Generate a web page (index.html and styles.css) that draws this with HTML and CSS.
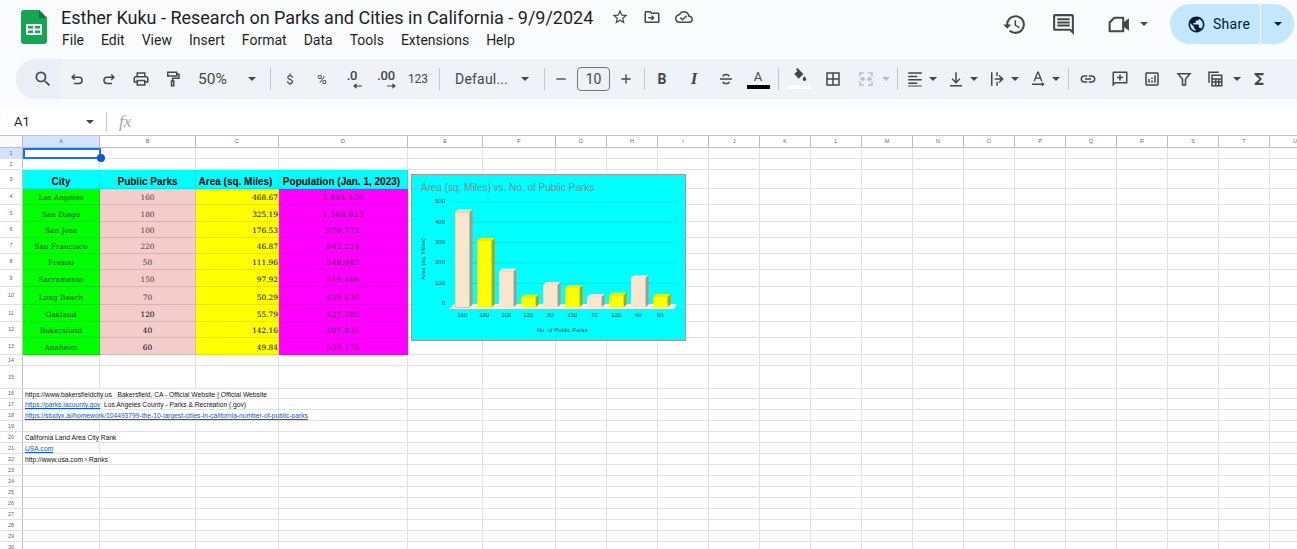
FILE: index.html
```html
<!DOCTYPE html>
<html lang="en">

<head>
    <meta charset="UTF-8">
    <title>Esther Kuku - Research on Parks and Cities in California - 9/9/2024</title>
    <link rel="stylesheet" href="styles.css">
</head>

<body>

    <div class="titlebar">
        <svg class="logo" viewBox="0 0 26 34">
            <path d="M3 0h15l8 8v23a3 3 0 0 1-3 3H3a3 3 0 0 1-3-3V3a3 3 0 0 1 3-3z" fill="#11a851" />
            <path d="M18 0l8 8h-8z" fill="#0b7a3b" />
            <path d="M5 14h16v11H5z" fill="#fff" />
            <path d="M7 16h5v2.5H7zM14 16h5v2.5h-5zM7 20.5h5V23H7zM14 20.5h5V23h-5z" fill="#11a851" />
        </svg>
        <div class="doc">
            <div class="doc-top">
                <span class="doc-name">Esther Kuku - Research on Parks and Cities in California - 9/9/2024</span>
                <svg class="doc-icon" viewBox="0 0 24 24"><path d="M22 9.24l-7.19-.62L12 2 9.19 8.63 2 9.24l5.46 4.73L5.82 21 12 17.27 18.18 21l-1.63-7.03L22 9.24zM12 15.4l-3.76 2.27 1-4.28-3.32-2.88 4.38-.38L12 6.1l1.71 4.04 4.38.38-3.32 2.88 1 4.28L12 15.4z" /></svg>
                <svg class="doc-icon" viewBox="0 0 24 24"><path d="M20 6h-8l-2-2H4c-1.1 0-2 .9-2 2v12c0 1.1.9 2 2 2h16c1.1 0 2-.9 2-2V8c0-1.1-.9-2-2-2zm0 12H4V6h5.17l2 2H20v10zM12 9.5l3.5 3.5-3.5 3.5-1.2-1.2 1.4-1.4H7v-1.8h5.2l-1.4-1.4z" /></svg>
                <svg class="doc-icon" viewBox="0 0 24 24"><path d="M19.35 10.04C18.67 6.59 15.64 4 12 4 9.11 4 6.6 5.64 5.35 8.04 2.34 8.36 0 10.91 0 14c0 3.31 2.69 6 6 6h13c2.76 0 5-2.24 5-5 0-2.64-2.05-4.78-4.65-4.96zM19 18H6c-2.21 0-4-1.79-4-4 0-2.05 1.53-3.76 3.56-3.97l1.07-.11.5-.95C8.08 7.14 9.94 6 12 6c2.62 0 4.88 1.86 5.39 4.43l.3 1.5 1.53.11c1.56.1 2.78 1.41 2.78 2.96 0 1.65-1.35 3-3 3zm-9-3.82l-2.09-2.09L6.5 13.5 10 17l6.01-6.01-1.41-1.41z" /></svg>
            </div>
            <div class="menu">
                <span>File</span><span>Edit</span><span>View</span><span>Insert</span><span>Format</span><span>Data</span><span>Tools</span><span>Extensions</span><span>Help</span>
            </div>
        </div>
        <div class="actions">
            <svg class="act-icon" viewBox="0 0 24 24"><path d="M13 3a9 9 0 0 0-9 9H1l3.89 3.89.07.14L9 12H6c0-3.87 3.13-7 7-7s7 3.13 7 7-3.13 7-7 7c-1.93 0-3.68-.79-4.94-2.06l-1.42 1.42A8.954 8.954 0 0 0 13 21a9 9 0 0 0 0-18zm-1 5v5l4.28 2.54.72-1.21-3.5-2.08V8H12z" /></svg>
            <svg class="act-icon act-comment" viewBox="0 0 24 24"><path d="M21.99 4c0-1.1-.89-2-1.99-2H4c-1.1 0-2 .9-2 2v12c0 1.1.9 2 2 2h14l4 4-.01-18zM20 4v13.17L18.83 16H4V4h16zM6 12h12v2H6zm0-3h12v2H6zm0-3h12v2H6z" /></svg>
            <svg class="act-icon act-video" viewBox="0 0 24 24"><path d="M8 5.5h8.5v13H3.5V10z" fill="none" stroke="#444746" stroke-width="2" stroke-linejoin="round" /><path d="M16 10.5l6-4.5v12l-6-4.5z" /></svg>
            <i class="caret"></i>
            <div class="share">
                <div class="share-main">
                    <svg class="globe" viewBox="0 0 24 24"><path d="M12 2C6.48 2 2 6.48 2 12s4.48 10 10 10 10-4.48 10-10S17.52 2 12 2zm-1 17.93c-3.95-.49-7-3.85-7-7.93 0-.62.08-1.21.21-1.79L9 15v1c0 1.1.9 2 2 2v1.93zm6.9-2.54c-.26-.81-1-1.39-1.9-1.39h-1v-3c0-.55-.45-1-1-1H8v-2h2c.55 0 1-.45 1-1V7h2c1.1 0 2-.9 2-2v-.41c2.93 1.19 5 4.06 5 7.41 0 2.08-.8 3.97-2.1 5.39z" /></svg>
                    <span>Share</span>
                </div>
                <div class="share-more"><i class="caret caret-dark"></i></div>
            </div>
        </div>
    </div>

    <div class="toolbar">
        <div class="tb tb-search">
            <svg viewBox="0 0 24 24"><path d="M15.5 14h-.79l-.28-.27A6.471 6.471 0 0 0 16 9.5 6.5 6.5 0 1 0 9.5 16c1.61 0 3.09-.59 4.23-1.57l.27.28v.79l5 4.99L20.49 19l-4.99-5zm-6 0C7.01 14 5 11.99 5 9.5S7.01 5 9.5 5 14 7.01 14 9.5 11.99 14 9.5 14z" /></svg>
        </div>
        <div class="tb">
            <svg viewBox="0 0 24 24"><path class="line" d="M6 9.5h8.5a4.2 4.2 0 0 1 0 8.5H8M9 6L5.5 9.5 9 13" /></svg>
        </div>
        <div class="tb">
            <svg viewBox="0 0 24 24"><path class="line" d="M18 9.5H9.5a4.2 4.2 0 0 0 0 8.5H16M15 6l3.5 3.5L15 13" /></svg>
        </div>
        <div class="tb">
            <svg viewBox="0 0 24 24"><path d="M19 8h-1V3H6v5H5c-1.66 0-3 1.34-3 3v6h4v4h12v-4h4v-6c0-1.66-1.34-3-3-3zM8 5h8v3H8V5zm8 12v2H8v-4h8v2zm2-2v-2H6v2H4v-4c0-.55.45-1 1-1h14c.55 0 1 .45 1 1v4h-2z" /></svg>
        </div>
        <div class="tb tb-paint">
            <svg viewBox="0 0 24 24"><path class="line" d="M5 3h12v5H5zM17 5.500h3V11h-8.500v3.500M10 14.500h3V21h-3z" /></svg>
        </div>
        <div class="tb-select tb-zoom"><span>50%</span><i class="caret"></i></div>
        <i class="sep sep-a"></i>
        <div class="tb tb-txt">$</div>
        <div class="tb tb-txt">%</div>
        <div class="tb tb-dec tb-dec-less">.0<svg viewBox="0 0 10 6"><path d="M10 2.400H4V0L0 3l4 3V3.600h6z" /></svg></div>
        <div class="tb tb-dec">.00<svg viewBox="0 0 10 6"><path d="M0 2.400h6V0l4 3-4 3V3.600H0z" /></svg></div>
        <div class="tb tb-txt tb-small">123</div>
        <i class="sep sep-b"></i>
        <div class="tb-select tb-font"><span>Defaul...</span><i class="caret"></i></div>
        <i class="sep sep-c"></i>
        <div class="tb tb-sign">
            <svg viewBox="0 0 24 24"><path d="M5 11h14v2H5z" /></svg>
        </div>
        <div class="font-size">10</div>
        <div class="tb tb-sign">
            <svg viewBox="0 0 24 24"><path d="M19 13h-6v6h-2v-6H5v-2h6V5h2v6h6v2z" /></svg>
        </div>
        <i class="sep sep-d"></i>
        <div class="tb tb-fmt tb-bold">B</div>
        <div class="tb tb-fmt tb-italic">I</div>
        <div class="tb">
            <svg viewBox="0 0 24 24"><path class="line" d="M4 12h16M8 8.500C8 5 16 5 16 8.500M8 15.500c0 3.500 8 3.500 8 0" /></svg>
        </div>
        <div class="tb tb-color">
            <span>A</span><i class="bar bar-black"></i>
        </div>
        <i class="sep sep-e"></i>
        <div class="tb tb-fill">
            <svg viewBox="0 0 24 24"><path d="M9 1.500l8.500 8.500-6.500 6.500L4.500 10 9 5.500 7 3.500zM19 13s2.500 2.700 2.500 4.200a2.500 2.500 0 0 1-5 0C16.500 15.700 19 13 19 13z" /></svg>
            <i class="bar bar-white"></i>
        </div>
        <div class="tb tb-borders">
            <svg viewBox="0 0 24 24"><path class="line" d="M4 4h16v16H4zM12 4v16M4 12h16" /></svg>
        </div>
        <div class="tb tb-merge">
            <svg viewBox="0 0 24 24"><path class="line line-off" d="M9 4H4v5M4 15v5h5M15 4h5v5M20 15v5h-5M4 12h5M7 9.500L9.500 12 7 14.500M20 12h-5M17 9.500L14.500 12l2.500 2.500" /></svg>
        </div>
        <i class="caret caret-off"></i>
        <i class="sep sep-f"></i>
        <div class="tb-pair">
            <svg viewBox="0 0 24 24"><path d="M3 3h18v2H3zM3 7.500h12v2H3zM3 12h18v2H3zM3 16.500h12v2H3zM3 20.500h18v1.500H3z" /></svg>
            <i class="caret"></i>
        </div>
        <div class="tb-pair">
            <svg viewBox="0 0 24 24"><path d="M11 3h2v11.500l3.500-3.500 1.400 1.400L12 18.300l-5.900-5.900L7.500 11l3.500 3.500zM4 20h16v2H4z" /></svg>
            <i class="caret"></i>
        </div>
        <div class="tb-pair">
            <svg viewBox="0 0 24 24"><path d="M4 3h2v18H4zM17 11H9v2h8l-3 3 1.400 1.400L21 12l-5.600-5.400L14 8zM11 3h2v5h-2zM11 16h2v5h-2z" /></svg>
            <i class="caret"></i>
        </div>
        <div class="tb-pair">
            <svg viewBox="0 0 24 24"><path d="M11 2h2l5 13h-2l-1.200-3.300H9.200L8 15H6zM9.900 10h4.200L12 4.400zM4 18h13v-2l4 3-4 3v-2H4z" /></svg>
            <i class="caret"></i>
        </div>
        <i class="sep sep-g"></i>
        <div class="tb">
            <svg viewBox="0 0 24 24"><path d="M17 7h-4v2h4c1.650 0 3 1.350 3 3s-1.350 3-3 3h-4v2h4c2.760 0 5-2.240 5-5s-2.240-5-5-5zm-6 8H7c-1.650 0-3-1.350-3-3s1.350-3 3-3h4V7H7c-2.760 0-5 2.240-5 5s2.240 5 5 5h4v-2zm-3-4h8v2H8z" /></svg>
        </div>
        <div class="tb">
            <svg viewBox="0 0 24 24"><path d="M21 2H3.500C2.700 2 2 2.700 2 3.500V22l4-4h15c.8 0 1-.7 1-1.500v-13C22 2.700 21.800 2 21 2zm-1 14H5.200L4 17.200V4h16zM11 6h2v3h3v2h-3v3h-2v-3H8V9h3z" /></svg>
        </div>
        <div class="tb">
            <svg viewBox="0 0 24 24"><path d="M19 3H5c-1.100 0-2 .9-2 2v14c0 1.100.9 2 2 2h14c1.100 0 2-.9 2-2V5c0-1.100-.9-2-2-2zm0 16H5V5h14zM7 12h2v5H7zM15 7h2v10h-2zM11 14h2v3h-2zM11 10h2v2h-2z" /></svg>
        </div>
        <div class="tb">
            <svg viewBox="0 0 24 24"><path class="line" d="M4 5h16l-6 7.500V20h-4v-7.500z" /></svg>
        </div>
        <div class="tb-pair tb-pair-calc">
            <svg viewBox="0 0 24 24"><path d="M3 2h14v2H5v13H3zM7 6h15v16H7zM9 8v3h11V8zM9 13v2h3v-2zm5 0v2h2v-2zm4 0v2h2v-2zM9 17v3h3v-3zm5 0v3h2v-3zm4 0v3h2v-3z" /></svg>
            <i class="caret"></i>
        </div>
        <div class="tb">
            <svg viewBox="0 0 24 24"><path d="M18 4H6v2l6.500 6L6 18v2h12v-3h-7l5-5-5-5h7z" /></svg>
        </div>
    </div>

    <div class="formula">
        <div class="namebox"><span>A1</span><i class="caret"></i></div>
        <i class="formula-sep"></i>
        <span class="fx">fx</span>
    </div>

    <div class="sheet-wrap">
        <div class="sheet" id="sheet"></div>

        <div class="sel-box"></div>
        <div class="sel-handle"></div>

        <div class="chart">
            <svg viewBox="0 0 274 166" width="274" height="166" id="chart">
                <text class="chart-title" x="8.500" y="16">Area (sq. Miles) vs. No. of Public Parks</text>
                <text x="150" y="157" text-anchor="middle">No. of Public Parks</text>
                <text transform="translate(13 84) rotate(-90)" text-anchor="middle">Area (sq. Miles)</text>
            </svg>
        </div>
    </div>

    <script src="script.js"></script>
</body>

</html>
```

FILE: styles.css
```css
* {
    box-sizing: border-box;
}

html,
body {
    margin: 0;
    height: 549px;
    overflow: hidden;
}

body {
    width: 1297px;
    background-color: #f9fbfd;
    font-family: Roboto, "Liberation Sans", sans-serif;
    color: #1f1f1f;
}

svg {
    display: block;
    fill: #444746;
}

/* title row */
.titlebar {
    display: flex;
    height: 59px;
    padding: 10px 3px 0 21px;
}

.logo {
    width: 26px;
    height: 34px;
    flex: none;
}

.doc {
    margin: -2px 0 0 14px;
}

.doc-top {
    display: flex;
    align-items: center;
    height: 18px;
}

.doc-name {
    font-size: 18px;
    white-space: nowrap;
    margin-right: 18px;
}

.doc-icon {
    width: 18px;
    height: 18px;
    margin-right: 14px;
}

.menu {
    display: flex;
    gap: 17px;
    margin: 6px 0 0 1px;
    font-size: 14px;
    line-height: 16px;
}

.actions {
    display: flex;
    align-items: center;
    margin: -6px 0 0 auto;
    height: 40px;
}

.act-icon {
    width: 25px;
    height: 25px;
    margin-right: 24px;
}

.act-comment {
    margin-right: 30px;
}

.act-video {
    margin-right: 9px;
}

.caret {
    display: block;
    flex: none;
    width: 0;
    height: 0;
    border-left: 4px solid transparent;
    border-right: 4px solid transparent;
    border-top: 4px solid #444746;
}

.caret-dark {
    border-top-color: #001d35;
}

.caret-off {
    border-top-color: #b9bdc1;
}

.share {
    display: flex;
    margin-left: 22px;
    width: 124px;
    height: 40px;
    background-color: #c2e7ff;
    border-radius: 20px;
    color: #001d35;
}

.share-main {
    display: flex;
    align-items: center;
    width: 91px;
    padding-left: 17px;
    font-size: 14px;
    letter-spacing: 0.3px;
    border-right: 1px solid #fff;
}

.globe {
    width: 19px;
    height: 19px;
    margin-right: 7px;
    fill: #001d35;
}

.share-more {
    display: flex;
    align-items: center;
    justify-content: center;
    flex: 1;
}

/* toolbar */
.toolbar {
    display: flex;
    align-items: center;
    height: 40px;
    margin-left: 16px;
    background-color: #eff3f8;
    border-radius: 20px 0 0 20px;
    color: #444746;
    font-size: 14px;
}

.tb {
    display: flex;
    flex: none;
    align-items: center;
    justify-content: center;
    width: 32px;
    height: 40px;
}

.tb svg {
    width: 18px;
    height: 18px;
}

.line {
    fill: none;
    stroke: #444746;
    stroke-width: 2;
}

.line-off {
    stroke: #b9bdc1;
}

.tb-search {
    width: 45px;
    padding-left: 8px;
    background-color: #e9eef7;
    border-radius: 20px 0 0 20px;
}

.tb-search svg {
    width: 20px;
    height: 20px;
}

.tb-paint {
    width: 31px;
}

.tb-select {
    display: flex;
    flex: none;
    align-items: center;
    justify-content: space-between;
    height: 40px;
}

.tb-zoom {
    width: 74px;
    padding: 0 6px 0 10px;
    font-size: 15.5px;
}

.tb-font {
    width: 94px;
    padding: 0 5px 0 15px;
    font-size: 14px;
    letter-spacing: 0.2px;
}

.sep {
    display: block;
    flex: none;
    width: 1px;
    height: 22px;
    background-color: #c7c7c7;
}

.sep-a {
    margin: 0 3px 0 8px;
}

.sep-b {
    margin: 0 0 0 5px;
}

.sep-c {
    margin: 0 0 0 10px;
}

.sep-d {
    margin: 0 1px 0 2px;
}

.sep-e {
    margin: 0 4px 0 4px;
}

.sep-f {
    margin: 0 0 0 7px;
}

.sep-g {
    margin: 0 3px 0 6px;
}

.tb-txt {
    font-size: 13px;
}

.tb-small {
    font-size: 12px;
}

.tb-dec {
    position: relative;
    padding-bottom: 8px;
    font-size: 13px;
    font-weight: 500;
    letter-spacing: -0.3px;
}

.tb-dec svg {
    position: absolute;
    right: 6px;
    bottom: 10px;
    width: 9px;
    height: 6px;
}

.tb-dec-less {
    margin: 0 2px 0 -2px;
}

.tb-sign svg {
    width: 16px;
    height: 16px;
}

.font-size {
    width: 33px;
    height: 24px;
    flex: none;
    border: 1px solid #747775;
    border-radius: 4px;
    text-align: center;
    line-height: 22px;
    font-size: 14px;
}

.tb-fmt {
    font-size: 14px;
}

.tb-bold {
    font-weight: 700;
}

.tb-italic {
    font-family: "Liberation Serif", serif;
    font-style: italic;
    font-size: 17px;
    font-weight: 700;
}

.tb-color,
.tb-fill {
    flex-direction: column;
    justify-content: center;
    font-size: 13px;
}

.tb-color {
    padding-top: 1px;
}

.tb-color span {
    line-height: 14px;
}

.tb-fill svg {
    width: 17px;
    height: 17px;
    margin-top: -3px;
}

.bar {
    display: block;
    width: 23px;
    height: 4px;
    margin-top: 1px;
}

.bar-black {
    background-color: #000;
}

.bar-white {
    background-color: #fff;
}

.tb-borders {
    margin-left: 2px;
}

.tb-merge {
    margin-left: 1px;
}

.tb-pair {
    display: flex;
    flex: none;
    align-items: center;
    width: 41px;
    height: 40px;
    padding-left: 8px;
}

.tb-pair svg {
    width: 18px;
    height: 18px;
    margin-right: 5px;
}

.tb-pair-calc {
    width: 43px;
    padding-left: 6px;
}

.tb-pair-calc svg {
    margin-right: 9px;
}

/* formula bar */
.formula {
    display: flex;
    align-items: center;
    height: 28px;
    margin-top: 9px;
    padding-left: 14px;
    background-color: #fff;
    border-bottom: 1px solid #c4c4c4;
}

.namebox {
    display: flex;
    align-items: center;
    justify-content: space-between;
    width: 80px;
    font-size: 13px;
}

.formula-sep {
    display: block;
    width: 1px;
    height: 20px;
    margin-left: 12px;
    background-color: #c7c7c7;
}

.fx {
    margin-left: 12px;
    font-family: "Liberation Serif", serif;
    font-style: italic;
    font-size: 17px;
    color: #a6a6a6;
}

/* sheet */
.sheet-wrap {
    position: relative;
    height: 414px;
    overflow: hidden;
    background-color: #fff;
}

.sheet {
    display: grid;
    grid-template-columns: 23px 77px 96px 83px 129px 75px 73px repeat(15, 51px);
    grid-template-rows: 12px 11px 11px 19px 16px 17px 16px 16px 16px 17px 18px 17px 16px 17px 11px 23px 10px repeat(14, 11px);
    font-family: "Liberation Sans", Arial, sans-serif;
}

.cell {
    min-width: 0;
    border-right: 1px solid #e1e1e1;
    border-bottom: 1px solid #e1e1e1;
    padding: 0 2px;
    font-size: 6.7px;
    line-height: 11px;
    white-space: nowrap;
    overflow: visible;
    color: #111;
}

.col-head,
.row-head {
    display: flex;
    align-items: center;
    justify-content: center;
    padding: 0;
    font-size: 5.5px;
    color: #666;
    border-right-color: #bdbdbd;
    background-color: #fff;
}

.col-head {
    border-bottom-color: #bdbdbd;
}

.corner {
    background-color: #f8f9fa;
    border-right-color: #bdbdbd;
    border-bottom-color: #bdbdbd;
}

.is-active {
    background-color: #d3e3fd;
}

.head-cell,
.data {
    display: flex;
    align-items: flex-end;
    justify-content: center;
}

.head-cell {
    padding: 0;
    background-color: #00ffff;
    border-color: #00e6e6;
    color: #000;
    font-size: 10px;
    font-weight: 700;
    line-height: 12px;
}

.head-left {
    padding-right: 3px;
}

.data {
    padding: 0;
    font-family: "DejaVu Serif", serif;
    font-size: 7.4px;
    line-height: 12px;
}

.c-city {
    background-color: #00ff00;
    border-color: #00e000;
    color: #1e4a1e;
}

.c-parks {
    background-color: #f4cccc;
    border-color: #dcb4b4;
    color: #4a3f3f;
}

.c-dark {
    color: #000;
}

.c-area {
    justify-content: flex-end;
    background-color: #ffff00;
    border-color: #e6e600;
    color: #000;
}

.c-pop {
    background-color: #ff00ff;
    border-color: #ff00ff;
    border-bottom-color: #e600e6;
    color: #5f2a6a;
    letter-spacing: 0.4px;
}

.link {
    color: #1155cc;
    text-decoration: underline;
}

.sel-box {
    position: absolute;
    left: 23px;
    top: 12px;
    width: 78px;
    height: 11px;
    border: 2px solid #1a73e8;
}

.sel-handle {
    position: absolute;
    left: 97px;
    top: 18px;
    width: 8px;
    height: 8px;
    border-radius: 50%;
    background-color: #0b57d0;
}

.chart {
    position: absolute;
    left: 411px;
    top: 38px;
    width: 275px;
    height: 167px;
    background-color: #00ffff;
    border: 1px solid #999;
}

.chart svg {
    filter: blur(0.3px);
}

.chart text {
    font-family: "Liberation Sans", Arial, sans-serif;
    font-size: 6px;
    fill: #0e4a4a;
}

.chart .chart-title {
    font-size: 10px;
    fill: #6f8a8a;
}
```

FILE: script.js
```js
// sheet data
var columns = ["A", "B", "C", "D", "E", "F", "G", "H", "I", "J", "K", "L", "M", "N", "O", "P", "Q", "R", "S", "T", "U"];
var rowCount = 30;

var tableRows = [
    ["Los Angeles", "160", "468.67", "3,804,420"],
    ["San Diego", "180", "325.19", "1,388,623"],
    ["San Jose", "100", "176.53", "970,772"],
    ["San Francisco", "220", "46.87", "842,224"],
    ["Fresno", "50", "111.96", "548,087"],
    ["Sacramento", "150", "97.92", "519,466"],
    ["Long Beach", "70", "50.29", "459,630"],
    ["Oakland", "120", "55.79", "427,305"],
    ["Bakersfield", "40", "142.16", "407,835"],
    ["Anaheim", "60", "49.84", "339,175"]
];

// rows 16-22 hold long text, span = how many columns it runs over
var notes = {
    16: { span: 3, html: 'https://www.bakersfieldcity.us &nbsp; Bakersfield, CA - Official Website | Official Website' },
    17: { span: 3, html: '<span class="link">https://parks.lacounty.gov</span> &nbsp;Los Angeles County - Parks &amp; Recreation (.gov)' },
    18: { span: 4, html: '<span class="link">https://studyx.ai/homework/104493799-the-10-largest-cities-in-california-number-of-public-parks</span>' },
    20: { span: 2, html: 'California Land Area City Rank' },
    21: { span: 1, html: '<span class="link">USA.com</span>' },
    22: { span: 2, html: 'http://www.usa.com › Ranks' }
};

var sheet = document.getElementById("sheet");

function addCell(className, text, span) {
    var cell = document.createElement("div");
    cell.className = "cell " + className;
    if (text) {
        cell.innerHTML = text;
    }
    if (span > 1) {
        cell.style.gridColumn = "span " + span;
    }
    sheet.appendChild(cell);
}

addCell("corner");
columns.forEach(function(name, i) {
    addCell("col-head" + (i == 0 ? " is-active" : ""), name);
});

for (let r = 1; r <= rowCount; r++) {
    addCell("row-head" + (r == 1 ? " is-active" : ""), String(r));
    let used = 0;

    if (r == 3) {
        addCell("head-cell", "City");
        addCell("head-cell", "Public Parks");
        addCell("head-cell head-left", "Area (sq. Miles)");
        addCell("head-cell head-left", "Population (Jan. 1, 2023)");
        used = 4;
    } else if (r >= 4 && r <= 13) {
        let row = tableRows[r - 4];
        addCell("data c-city", row[0]);
        addCell("data c-parks" + (r >= 11 ? " c-dark" : ""), row[1]);
        addCell("data c-area", row[2]);
        addCell("data c-pop", row[3]);
        used = 4;
    } else if (notes[r]) {
        addCell("", notes[r].html, notes[r].span);
        used = notes[r].span;
    }

    for (let c = used; c < columns.length; c++) {
        addCell("");
    }
}

// 3d bars of the chart
var bars = [
    { x: 43, top: 37, label: "160" },
    { x: 65, top: 66, label: "180" },
    { x: 87, top: 96.5, label: "100" },
    { x: 109, top: 122.5, label: "220" },
    { x: 131, top: 110, label: "50" },
    { x: 153, top: 113, label: "150" },
    { x: 175, top: 122, label: "70" },
    { x: 197, top: 120.5, label: "120" },
    { x: 219, top: 103, label: "40" },
    { x: 241, top: 122, label: "60" }
];
var bottom = 132.5;
var barWidth = 14.5;
var depth = 3;

var palettes = [
    { front: "#fce5cd", side: "#a89a8a", top: "#efe3d3" },
    { front: "#ffff00", side: "#a8a800", top: "#ecec00" }
];

function svgEl(name, attrs, parent) {
    var el = document.createElementNS("http://www.w3.org/2000/svg", name);
    for (var k in attrs) {
        el.setAttribute(k, attrs[k]);
    }
    parent.appendChild(el);
    return el;
}

var chart = document.getElementById("chart");
var plot = svgEl("g", {}, chart);

// grid lines and y labels
for (let i = 0; i <= 5; i++) {
    let y = 128.7 - i * 20.35;
    svgEl("line", { x1: 42, x2: 265, y1: y, y2: y, stroke: "#00dcdc", "stroke-width": 0.8 }, plot);
    let t = svgEl("text", { x: 33, y: y + 1.2, "text-anchor": "end" }, plot);
    t.textContent = i * 100;
}

// floor
svgEl("polygon", { points: "37,134 262,134 265,128.7 42,128.7", fill: "#e6eeee" }, plot);

bars.forEach(function(b, i) {
    var p = palettes[i % 2];
    var right = b.x + barWidth;
    svgEl("polygon", { points: right + "," + b.top + " " + (right + depth) + "," + (b.top - depth) + " " + (right + depth) + "," + (bottom - depth) + " " + right + "," + bottom, fill: p.side }, plot);
    svgEl("polygon", { points: b.x + "," + b.top + " " + (b.x + depth) + "," + (b.top - depth) + " " + (right + depth) + "," + (b.top - depth) + " " + right + "," + b.top, fill: p.top }, plot);
    var front = { x: b.x, y: b.top, width: barWidth, height: bottom - b.top, fill: p.front };
    if (i == 0) {
        front.stroke = "#8fd48f";
        front["stroke-width"] = 0.7;
    }
    svgEl("rect", front, plot);
    var t = svgEl("text", { x: b.x + 7.2, y: 141.5, "text-anchor": "middle" }, plot);
    t.textContent = b.label;
});
```
